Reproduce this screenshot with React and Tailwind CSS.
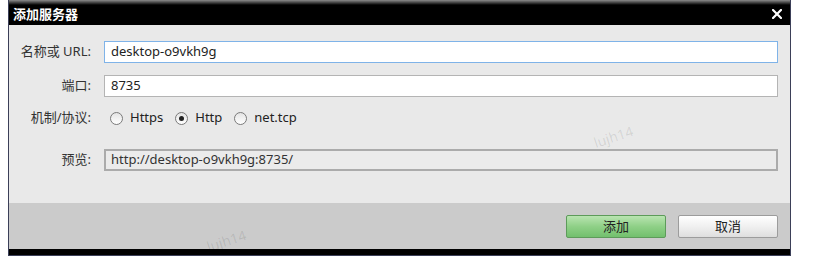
import React from "react";

const font = { fontFamily: '"Noto Sans", "Open Sans", "Noto Sans CJK SC", sans-serif' };

function Radio({ checked, label }) {
  return (
    <label className="flex items-center gap-[7px]">
      <span className="w-[13px] h-[13px] rounded-full border border-[#7a7a7a] bg-[linear-gradient(to_bottom,#e4e4e4,#ffffff)] flex items-center justify-center">
        {checked && <span className="w-[5px] h-[5px] rounded-full bg-[#222]" />}
      </span>
      <span>{label}</span>
    </label>
  );
}

function Row({ label, children, className = "" }) {
  return (
    <div className={"flex items-center " + className}>
      <div className="w-[82px] text-right text-[#333] shrink-0">{label}</div>
      <div className="ml-[13px] flex-1">{children}</div>
    </div>
  );
}

export default function App() {
  return (
    <div className="bg-white h-[256px] pl-2 relative overflow-hidden text-[13px] text-[#222]" style={font}>
      <div className="w-[783px] h-full flex flex-col border-x border-[#3b3f58]">
        <div className="h-[25px] shrink-0 bg-[linear-gradient(to_bottom,#8c8c8c_0px,#000_5px)] flex items-center justify-between pl-[4px] pr-[8px]">
          <span className="text-white font-bold text-[13px] leading-none pt-[3px]">添加服务器</span>
          <svg width="10" height="10" viewBox="0 0 10 10" className="mt-[2px]">
            <path d="M1 1L9 9M9 1L1 9" stroke="#fff" strokeWidth="2.2" strokeLinecap="square" />
          </svg>
        </div>

        <div className="h-[178px] shrink-0 bg-[#e9e9e9] pt-[16px] pr-[12px]">
          <Row label="名称或 URL:">
            <div className="h-[22px] border border-[#7fb3e8] bg-white flex items-center px-[6px]">desktop-o9vkh9g</div>
          </Row>
          <Row label="端口:" className="mt-[12px]">
            <div className="h-[22px] border border-[#b4b4b4] bg-white flex items-center px-[6px]">8735</div>
          </Row>
          <Row label="机制/协议:" className="mt-[10px] h-[22px]">
            <div className="flex items-center gap-[12px] pl-[6px]">
              <Radio label="Https" />
              <Radio checked label="Http" />
              <Radio label="net.tcp" />
            </div>
          </Row>
          <Row label="预览:" className="mt-[20px]">
            <div className="h-[22px] border-2 border-[#ababab] bg-[#ebebeb] flex items-center px-[5px] text-[#333]">
              http://desktop-o9vkh9g:8735/
            </div>
          </Row>
        </div>

        <div className="h-[46px] shrink-0 bg-[#cbcbcb] flex items-center justify-end gap-[12px] pr-[12px] pt-[1px]">
          <button className="w-[100px] h-[23px] rounded-[2px] border border-[#5d9b5a] bg-[linear-gradient(to_bottom,#b9e4b1,#8fd087_50%,#72c06d)] text-[#222] text-[13px]">
            添加
          </button>
          <button className="w-[100px] h-[23px] rounded-[2px] border border-[#9c9c9c] bg-[linear-gradient(to_bottom,#ffffff,#f0f0f0_50%,#dedede)] text-[#222] text-[13px]">
            取消
          </button>
        </div>

        <div className="h-[6px] shrink-0 bg-black" />
        <div className="flex-1 bg-[#3b3f58]" />
      </div>

      <span className="absolute left-[593px] top-[126px] -rotate-[18deg] text-[14px] text-black/10 pointer-events-none">lujh14</span>
      <span className="absolute left-[206px] top-[230px] -rotate-[18deg] text-[14px] text-black/10 pointer-events-none">lujh14</span>
    </div>
  );
}
